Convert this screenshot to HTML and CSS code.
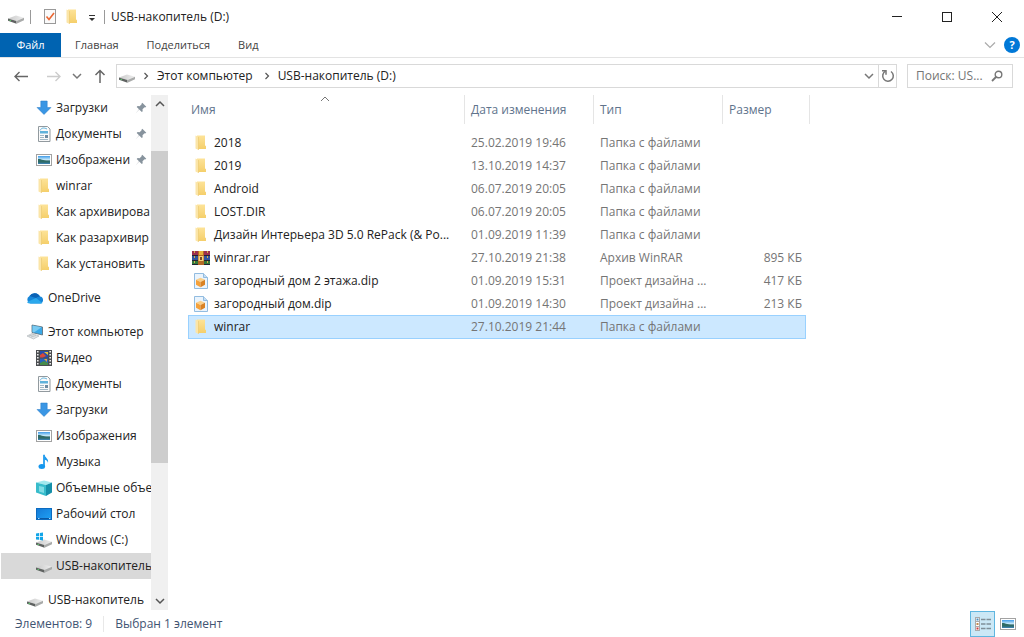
FILE: index.html
```html
<!DOCTYPE html>
<html lang="ru">
<head>
<meta charset="utf-8">
<title>USB-накопитель (D:)</title>
<link rel="stylesheet" href="styles.css">
</head>
<body>
<svg class="sprite" aria-hidden="true">
  <defs>
    <linearGradient id="g-folder" x1="0" x2="0" y1="0" y2="1"><stop offset="0" stop-color="#fde398"/><stop offset="1" stop-color="#f5cf6b"/></linearGradient>
    <linearGradient id="g-sky" x1="0" x2="0" y1="0" y2="1"><stop offset="0" stop-color="#3f9be8"/><stop offset=".5" stop-color="#d4f0fb"/><stop offset=".6" stop-color="#2f6668"/><stop offset="1" stop-color="#3d84b5"/></linearGradient>
    <linearGradient id="g-desk" x1="0" x2="1" y1="0" y2="1"><stop offset="0" stop-color="#1479d6"/><stop offset="1" stop-color="#1fa2f5"/></linearGradient>
    <linearGradient id="g-drive" x1="0" x2="1" y1="0" y2="0"><stop offset="0" stop-color="#c9c9c9"/><stop offset="1" stop-color="#eeeeee"/></linearGradient>
  </defs>
  <symbol id="folder" viewBox="0 0 16 16"><path d="M4 .5h8v10l1 .5v3H4z" fill="url(#g-folder)"/><path d="M2.500.5l3 1.500v13l-3-1.500z" fill="#fbe5a8"/><path d="M5.500 2v13" stroke="#e9c66c" stroke-width=".6"/></symbol>
  <symbol id="drive" viewBox="0 0 16 16"><path d="M0 9.500L8 6.500l8 2.200-7.500 3.300z" fill="url(#g-drive)"/><path d="M0 9.500L8.500 12v2.700L0 11.800z" fill="#5f6261"/><path d="M8.500 12L16 8.700v2.500l-7.500 3.500z" fill="#a9abaa"/><path d="M1.500 11.300l1.500.5" stroke="#58d36b"/></symbol>
  <symbol id="windrive" viewBox="0 0 16 16"><use href="#drive" x="0" y="1"/><path d="M0 1.500l3-.5v3H0zM3.800.9L7 .4V4H3.800zM0 4.800h3v3L0 7.400zM3.800 4.800H7v3.600L3.800 7.900z" fill="#12a5e8"/></symbol>
  <symbol id="download" viewBox="0 0 16 16"><path d="M4.800 1h6.400v6.500H15L8 14.500 1 7.500h3.800z" fill="#3a96e4" stroke="#2478c6" stroke-width=".5"/></symbol>
  <symbol id="doc" viewBox="0 0 16 16"><path d="M2.500.5h9l2.500 2.500v12.500H2.500z" fill="#fafafa" stroke="#929a9f"/><path d="M4 4.500c1.500-3 4-3 7-1.500" stroke="#62b4de" fill="none"/><rect x="4" y="5" width="8" height="2.500" fill="#5fb2db"/><path d="M4 9.500h4M4 11.500h4M4 13.500h8" stroke="#9fb8c6"/><rect x="9" y="9" width="3" height="3" fill="#6d8ba1"/></symbol>
  <symbol id="picture" viewBox="0 0 16 16"><rect x=".5" y="2.500" width="15" height="11" fill="#fff" stroke="#a2a2a2"/><rect x="2" y="4" width="12" height="8" fill="url(#g-sky)"/><path d="M2 7c4 0 6 2 12 2.500v1H2z" fill="#2f6b66"/></symbol>
  <symbol id="cloud" viewBox="0 0 18 16"><path d="M4.500 13.500A4 4 0 0 1 3.500 6 6 6 0 0 1 14 6.500a3.600 3.600 0 0 1 .5 7z" fill="#1686d9"/><path d="M3.500 6A6 6 0 0 1 14 6.500c-2 0-3 1-4 1.500z" fill="#0b62b5"/><path d="M1 12L10 8l6.500 5c-.6.4-1.200.5-2 .5h-10C3 13.500 1.600 13 1 12z" fill="#2ba8ec"/></symbol>
  <symbol id="pc" viewBox="0 0 16 16"><path d="M5 1l10.500 2v8L5 8.500z" fill="#3aa9e8" stroke="#5a6a73" stroke-width=".8"/><path d="M5.500 1.500l9 1.700L7 8.500l-1.500-.4z" fill="#7acbf2"/><path d="M0 12l5-2.500 7 2.500-5.500 3z" fill="#e1e5e7" stroke="#a9b0b4" stroke-width=".6"/><path d="M2 12l5-1.500M4 13l5-1.500" stroke="#a9b0b4" stroke-width=".6"/></symbol>
  <symbol id="video" viewBox="0 0 16 16"><rect width="16" height="16" fill="#4b4d50"/><rect x="4" y="1" width="8" height="6.500" fill="#244fae"/><rect x="4" y="8.500" width="8" height="6.500" fill="#2563bd"/><path d="M4 5l3-2 3 3-3 1.500H4z" fill="#d84a3a"/><path d="M8 2h4v3z" fill="#e5c43b"/><path d="M4 13l4-2 4 2v2H4z" fill="#468b4a"/><path d="M8 9h3v3z" fill="#e9a73a"/><path d="M1.800 1v15M14.200 1v15" stroke="#eee" stroke-width="1.600" stroke-dasharray="1.600 1.400"/></symbol>
  <symbol id="music" viewBox="0 0 16 16"><ellipse cx="5.800" cy="12.500" rx="3.300" ry="2.500" fill="#1597ee"/><path d="M8 .8v12" stroke="#1597ee" stroke-width="1.700"/><path d="M8.500.8c.5 3 4.500 4 3.500 8C11.500 6.500 10 6 8.500 5.500z" fill="#1597ee"/></symbol>
  <symbol id="cube" viewBox="0 0 16 16"><path d="M0 2.500L8 .5l8 2-6 2.500z" fill="#a2e8ee"/><path d="M0 2.500L10 5v11L0 12.500z" fill="#38bccb"/><path d="M10 5l6-2.500v10L10 16z" fill="#158fa9"/><path d="M3 6l5 1v6l-5-1.500z" fill="#80dce5"/></symbol>
  <symbol id="desktop" viewBox="0 0 16 16"><rect x=".5" y="2.500" width="15" height="11" fill="url(#g-desk)" stroke="#0c6bc0"/><path d="M1 12.500h14" stroke="#0b58a3"/><path d="M2 12.500h1.500M13 12.500h1.500" stroke="#9ed7ff"/></symbol>
  <symbol id="rar" viewBox="0 0 18 16"><rect y="1" width="18" height="5" fill="#9c2f4e"/><rect y="6" width="18" height="4" fill="#31539f"/><rect y="10" width="18" height="5" fill="#33793b"/><path d="M0 5.500h18M0 10.500h18M0 14.500h18" stroke="#232333"/><path d="M2.500 1v14M15.500 1v14" stroke="#d3b14b" stroke-dasharray="2 3"/><path d="M6 1h6v14H6z" fill="#b56a26"/><path d="M7 1h4v4H7z" fill="#e9b23b"/><rect x="6.500" y="6" width="5" height="5" fill="#f4d27a"/><path d="M8 7h2v3H8z" fill="#7b4a23"/></symbol>
  <symbol id="dip" viewBox="0 0 16 16"><path d="M1.500.5h9l4 4v11h-13z" fill="#eaf4fd" stroke="#92bce0"/><path d="M10.500.5v4h4" fill="#c6def3" stroke="#92bce0"/><path d="M3 6.800L7.500 4.800l4.500 2-4.500 2.100z" fill="#fbd08a"/><path d="M3 6.800l4.500 2.100v5.300L3 11.800z" fill="#f5a13a"/><path d="M12 6.800L7.500 8.900v5.300l4.500-2.400z" fill="#d98224"/></symbol>
  <symbol id="pin" viewBox="0 0 12 12"><path d="M7.300.8l4 4-1.200.6-.6-.1-2 2 .2 1.900-.9.900-2.600-2.500L.8 11.200 4 7.300 1.700 5l.9-.9 2 .2 2-2-.1-.6z" fill="#87939d"/></symbol>
  <symbol id="down" viewBox="0 0 12 12"><path d="M2 4l4 4 4-4" fill="none" stroke="currentColor" stroke-width="1.500"/></symbol>
  <symbol id="up" viewBox="0 0 12 12"><path d="M2 8l4-4 4 4" fill="none" stroke="currentColor" stroke-width="1.500"/></symbol>
  <symbol id="right" viewBox="0 0 12 12"><path d="M4.500 3l3 3-3 3" fill="none" stroke="currentColor" stroke-width="1.200"/></symbol>
</svg>

<div class="window">
  <header class="titlebar">
    <svg class="icon"><use href="#drive"/></svg>
    <span class="rule"></span>
    <button class="plain" aria-label="Свойства"><svg class="icon" viewBox="0 0 16 16"><rect x="2.500" y=".5" width="11" height="14" fill="#fafafa" stroke="#999"/><path d="M4.500 7.500l2.500 3 5-6.500" fill="none" stroke="#ea6632" stroke-width="1.600"/></svg></button>
    <button class="plain" aria-label="Новая папка"><svg class="icon"><use href="#folder"/></svg></button>
    <button class="plain" aria-label="Настройка панели"><svg class="small" viewBox="0 0 12 12"><path d="M3 4.500h6" stroke="#333"/><path d="M3 7h6L6 10z" fill="#333"/></svg></button>
    <span class="rule"></span>
    <h1 class="title">USB-накопитель (D:)</h1>
    <div class="controls">
      <button class="control" aria-label="Свернуть"><svg class="small" viewBox="0 0 12 12"><path d="M1 5.500h10" stroke="#222"/></svg></button>
      <button class="control" aria-label="Развернуть"><svg class="small" viewBox="0 0 12 12"><rect x="1.500" y="1.500" width="9" height="9" fill="none" stroke="#222"/></svg></button>
      <button class="control" aria-label="Закрыть"><svg class="small" viewBox="0 0 12 12"><path d="M1 1l10 10M11 1L1 11" stroke="#222"/></svg></button>
    </div>
  </header>

  <nav class="tabs" aria-label="Лента">
    <button class="tab tab-file">Файл</button>
    <button class="tab">Главная</button>
    <button class="tab">Поделиться</button>
    <button class="tab">Вид</button>
    <div class="tabs-end">
      <button class="plain expand" aria-label="Развернуть ленту"><svg class="small" viewBox="0 0 12 12"><path d="M1 3.500l5 5 5-5" fill="none" stroke="currentColor" stroke-width="1.200"/></svg></button>
      <button class="help" aria-label="Справка">?</button>
    </div>
  </nav>

  <div class="navbar">
    <div class="history">
      <button class="plain" aria-label="Назад"><svg class="icon" viewBox="0 0 16 16"><path d="M15 8.500H2M6.500 4L2 8.500 6.500 13" fill="none" stroke="#666" stroke-width="1.400"/></svg></button>
      <button class="plain forward" aria-label="Вперёд"><svg class="icon" viewBox="0 0 16 16"><path d="M1 8.500h13M9.500 4L14 8.500 9.500 13" fill="none" stroke="#ccc" stroke-width="1.400"/></svg></button>
      <button class="plain" aria-label="Последние"><svg class="small"><use href="#down"/></svg></button>
      <button class="plain" aria-label="Вверх"><svg class="icon" viewBox="0 0 16 16"><path d="M8 15V2.500M3.500 7L8 2.500 12.500 7" fill="none" stroke="#666" stroke-width="1.500"/></svg></button>
    </div>
    <div class="address">
      <svg class="icon"><use href="#drive"/></svg>
      <svg class="small crumb-arrow"><use href="#right"/></svg>
      <button class="plain crumb">Этот компьютер</button>
      <svg class="small crumb-arrow"><use href="#right"/></svg>
      <button class="plain crumb">USB-накопитель (D:)</button>
      <div class="address-end">
        <button class="plain address-button" aria-label="Предыдущие расположения"><svg class="small"><use href="#down"/></svg></button>
        <button class="plain address-button refresh" aria-label="Обновить"><svg class="icon" viewBox="0 0 16 16"><path d="M5.500 3.200A5.300 5.300 0 1 0 11 3.500" fill="none" stroke="#777" stroke-width="1.500"/><path d="M2 2.800h4v4" fill="none" stroke="#777" stroke-width="1.500"/></svg></button>
      </div>
    </div>
    <div class="search">
      <input class="search-input" type="text" placeholder="Поиск: US..." aria-label="Поиск">
      <svg class="small" viewBox="0 0 12 12"><circle cx="7.500" cy="4.500" r="3.300" fill="none" stroke="#777" stroke-width="1.400"/><path d="M5 7L1 11" stroke="#777" stroke-width="1.800"/></svg>
    </div>
  </div>

  <main class="content">
    <aside class="sidebar">
      <div class="tree">
        <ul class="group">
          <li><a class="item child" href="#"><svg class="icon"><use href="#download"/></svg><span class="label">Загрузки</span><svg class="small"><use href="#pin"/></svg></a></li>
          <li><a class="item child" href="#"><svg class="icon"><use href="#doc"/></svg><span class="label">Документы</span><svg class="small"><use href="#pin"/></svg></a></li>
          <li><a class="item child" href="#"><svg class="icon"><use href="#picture"/></svg><span class="label">Изображени</span><svg class="small"><use href="#pin"/></svg></a></li>
          <li><a class="item child" href="#"><svg class="icon"><use href="#folder"/></svg><span class="label">winrar</span></a></li>
          <li><a class="item child" href="#"><svg class="icon"><use href="#folder"/></svg><span class="label">Как архивирова</span></a></li>
          <li><a class="item child" href="#"><svg class="icon"><use href="#folder"/></svg><span class="label">Как разархивир</span></a></li>
          <li><a class="item child" href="#"><svg class="icon"><use href="#folder"/></svg><span class="label">Как установить</span></a></li>
        </ul>
        <ul class="group">
          <li><a class="item" href="#"><svg class="icon wide"><use href="#cloud"/></svg><span class="label">OneDrive</span></a></li>
        </ul>
        <ul class="group">
          <li><a class="item" href="#"><svg class="icon wide"><use href="#pc"/></svg><span class="label">Этот компьютер</span></a></li>
          <li><a class="item child" href="#"><svg class="icon"><use href="#video"/></svg><span class="label">Видео</span></a></li>
          <li><a class="item child" href="#"><svg class="icon"><use href="#doc"/></svg><span class="label">Документы</span></a></li>
          <li><a class="item child" href="#"><svg class="icon"><use href="#download"/></svg><span class="label">Загрузки</span></a></li>
          <li><a class="item child" href="#"><svg class="icon"><use href="#picture"/></svg><span class="label">Изображения</span></a></li>
          <li><a class="item child" href="#"><svg class="icon"><use href="#music"/></svg><span class="label">Музыка</span></a></li>
          <li><a class="item child" href="#"><svg class="icon"><use href="#cube"/></svg><span class="label">Объемные объе</span></a></li>
          <li><a class="item child" href="#"><svg class="icon"><use href="#desktop"/></svg><span class="label">Рабочий стол</span></a></li>
          <li><a class="item child" href="#"><svg class="icon"><use href="#windrive"/></svg><span class="label">Windows (C:)</span></a></li>
          <li><a class="item child current" href="#"><svg class="icon"><use href="#drive"/></svg><span class="label">USB-накопитель</span></a></li>
        </ul>
        <ul class="group">
          <li><a class="item" href="#"><svg class="icon wide"><use href="#drive"/></svg><span class="label">USB-накопитель</span></a></li>
        </ul>
      </div>
      <div class="scrollbar">
        <button class="plain scroll-button" aria-label="Прокрутить вверх"><svg class="small"><use href="#up"/></svg></button>
        <div class="track"><span class="gap-top"></span><span class="thumb"></span><span class="gap-bottom"></span></div>
        <button class="plain scroll-button" aria-label="Прокрутить вниз"><svg class="small"><use href="#down"/></svg></button>
      </div>
    </aside>

    <section class="files">
      <table class="list">
        <colgroup><col class="col-name"><col class="col-date"><col class="col-type"><col class="col-size"><col class="col-edge"></colgroup>
        <thead>
          <tr><th class="sorted">Имя<svg class="sort" viewBox="0 0 12 8"><path d="M2 6l4-4 4 4" fill="none" stroke="#777"/></svg></th><th>Дата изменения</th><th>Тип</th><th>Размер</th><th class="edge"></th></tr>
        </thead>
        <tbody>
          <tr><td><span class="name"><svg class="icon wide"><use href="#folder"/></svg>2018</span></td><td>25.02.2019 19:46</td><td>Папка с файлами</td><td class="size"></td><td></td></tr>
          <tr><td><span class="name"><svg class="icon wide"><use href="#folder"/></svg>2019</span></td><td>13.10.2019 14:37</td><td>Папка с файлами</td><td class="size"></td><td></td></tr>
          <tr><td><span class="name"><svg class="icon wide"><use href="#folder"/></svg>Android</span></td><td>06.07.2019 20:05</td><td>Папка с файлами</td><td class="size"></td><td></td></tr>
          <tr><td><span class="name"><svg class="icon wide"><use href="#folder"/></svg>LOST.DIR</span></td><td>06.07.2019 20:05</td><td>Папка с файлами</td><td class="size"></td><td></td></tr>
          <tr><td><span class="name"><svg class="icon wide"><use href="#folder"/></svg>Дизайн Интерьера 3D 5.0 RePack (&amp; Po...</span></td><td>01.09.2019 11:39</td><td>Папка с файлами</td><td class="size"></td><td></td></tr>
          <tr><td><span class="name"><svg class="icon wide"><use href="#rar"/></svg>winrar.rar</span></td><td>27.10.2019 21:38</td><td>Архив WinRAR</td><td class="size">895 КБ</td><td></td></tr>
          <tr><td><span class="name"><svg class="icon wide"><use href="#dip"/></svg>загородный дом 2 этажа.dip</span></td><td>01.09.2019 15:31</td><td>Проект дизайна ...</td><td class="size">417 КБ</td><td></td></tr>
          <tr><td><span class="name"><svg class="icon wide"><use href="#dip"/></svg>загородный дом.dip</span></td><td>01.09.2019 14:30</td><td>Проект дизайна ...</td><td class="size">213 КБ</td><td></td></tr>
          <tr class="selected"><td><span class="name"><svg class="icon wide"><use href="#folder"/></svg>winrar</span></td><td>27.10.2019 21:44</td><td>Папка с файлами</td><td class="size"></td><td></td></tr>
        </tbody>
      </table>
    </section>
  </main>

  <footer class="status">
    <span>Элементов: 9</span>
    <span class="status-rule"></span>
    <span>Выбран 1 элемент</span>
    <div class="views">
      <button class="view view-active" aria-label="Таблица"><svg class="icon" viewBox="0 0 16 16"><rect x=".5" y="1.500" width="4" height="13" fill="#fff" stroke="#aaa"/><path d="M.5 5.500h4M.5 10.500h4" stroke="#aaa"/><rect x="1.500" y="2.500" width="2" height="2" fill="#4a90c0"/><rect x="1.500" y="7" width="2" height="2" fill="#c08a4a"/><rect x="1.500" y="11.500" width="2" height="2" fill="#d03a3a"/><path d="M6 3.500h10M6 8h10M6 12.500h10" stroke="#7f8f99" stroke-width="1.300" stroke-dasharray="4.500 1"/></svg></button>
      <button class="view" aria-label="Крупные значки"><svg class="icon"><use href="#picture"/></svg></button>
    </div>
  </footer>
</div>
</body>
</html>
```
FILE: styles.css
```css
* { box-sizing: border-box; }

body {
  margin: 0;
  background: #fff;
  color: #222;
  font-family: "Open Sans", "Noto Sans", sans-serif;
  font-size: 12px;
  line-height: 18px;
}

button, input { font: inherit; color: inherit; }

ul { list-style: none; margin: 0; padding: 0; }

svg { display: block; flex: none; }

.sprite { position: absolute; width: 0; height: 0; }
.icon { width: 16px; height: 16px; }
.wide { width: 18px; }
.small { width: 12px; height: 12px; }

.plain {
  display: flex;
  align-items: center;
  justify-content: center;
  padding: 0;
  border: 0;
  background: none;
}

.window { display: flex; flex-direction: column; height: 100vh; }

/* Title bar */
.titlebar { display: flex; align-items: center; gap: 6px; height: 33px; padding-left: 8px; }
.rule { width: 1px; height: 14px; background: #999; }
.rule:nth-child(2) { margin-right: 5px; }
.title { margin: 0; font-size: 12px; font-weight: 400; }
.controls { display: flex; margin-left: auto; padding-right: 2px; }
.control {
  display: flex;
  align-items: center;
  justify-content: center;
  width: 50px;
  height: 32px;
  padding: 0;
  border: 0;
  background: none;
}

/* Ribbon tabs */
.tabs { display: flex; height: 25px; border-bottom: 1px solid #e3e3e3; font-size: 11px; }
.tab { padding: 0 14px; border: 0; background: none; color: #444; }
.tab-file { width: 61px; background: #0063b1; color: #fff; }
.tabs-end { display: flex; align-items: center; gap: 8px; margin-left: auto; padding-right: 4px; }
.expand { color: #aaa; }
.help {
  width: 16px;
  height: 16px;
  padding: 0;
  border: 0;
  border-radius: 50%;
  background: #0078d7;
  color: #fff;
  font-weight: 700;
  line-height: 16px;
}

/* Navigation bar */
.navbar { display: flex; align-items: center; gap: 8px; padding: 6px 11px 7px 13px; }
.history { display: flex; align-items: center; justify-content: space-between; width: 95px; color: #777; }
.forward { margin-left: 8px; }
.address {
  display: flex;
  flex: 1;
  align-items: center;
  height: 24px;
  padding-left: 2px;
  border: 1px solid #d9d9d9;
}
.crumb { padding-right: 3px; }
.crumb-arrow { margin: 0 5px; color: #555; }
.address-end { display: flex; align-self: stretch; margin-left: auto; color: #777; }
.address-button { width: 18px; }
.refresh { border-left: 1px solid #d9d9d9; }
.search {
  display: flex;
  align-items: center;
  width: 106px;
  height: 24px;
  margin-left: 2px;
  padding: 0 9px 0 8px;
  border: 1px solid #d9d9d9;
}
.search-input { flex: 1; min-width: 0; padding: 0; border: 0; background: none; outline: 0; }
.search-input::placeholder { color: #757575; opacity: 1; }

.content { display: flex; flex: 1; min-height: 0; }

/* Navigation pane */
.sidebar { display: flex; width: 168px; }
.tree {
  display: flex;
  flex: 1;
  flex-direction: column;
  gap: 8px;
  min-width: 0;
  overflow: hidden;
  padding-left: 1px;
}
.item {
  display: flex;
  align-items: center;
  height: 26px;
  padding-left: 25px;
  gap: 4px;
  color: inherit;
  text-decoration: none;
}
.child { padding-left: 35px; }
.child .small { margin-right: 4px; margin-left: -4px; }
.label { flex: 1; white-space: nowrap; }
.current { background: #d9d9d9; }
.scrollbar { display: flex; flex-direction: column; width: 17px; background: #f0f0f0; color: #555; }
.scroll-button { height: 18px; }
.track { display: flex; flex: 1; flex-direction: column; }
.gap-top { flex: 38; }
.thumb { flex: 312; background: #cdcdcd; }
.gap-bottom { flex: 129; }

/* File list */
.files { flex: 1; min-width: 0; padding-left: 20px; }
.list { width: 622px; border-collapse: separate; border-spacing: 0; table-layout: fixed; color: #757575; }
.col-name { width: 277px; }
.col-date, .col-type { width: 129px; }
.col-size { width: 83px; }
.col-edge { width: 4px; }
.list th {
  height: 29px;
  padding: 0 0 0 6px;
  border-right: 1px solid #e5e5e5;
  color: #60738c;
  font-weight: 400;
  text-align: left;
}
.list th:nth-child(4) { border-right: 0; }
.list .sorted { position: relative; padding-left: 3px; }
.list .edge { padding: 0; }
.sort { position: absolute; top: 0; left: 131px; width: 12px; height: 8px; }
.list tbody::before { content: ""; display: table-row; height: 7px; }
.list td {
  height: 23px;
  padding: 0 0 0 6px;
  border: 0 solid #99d1ff;
  line-height: 18px;
  white-space: nowrap;
}
.list td:first-child { padding-left: 4px; }
.list td:last-child { padding: 0; }
.list .size { padding: 0 4px 0 0; text-align: right; }
.name { display: flex; align-items: center; gap: 4px; color: #222; }
.list .selected td { height: 24px; border-width: 1px 0; background: #cce8ff; }
.list .selected td:first-child { border-left-width: 1px; padding-left: 3px; }
.list .selected .size { border-right-width: 1px; }
.list .selected td:last-child { border: 0; background: none; }

/* Status bar */
.status { display: flex; align-items: center; gap: 11px; height: 27px; padding: 0 4px 0 15px; color: #3f5472; }
.status-rule { width: 1px; height: 16px; background: #e8e8e8; }
.views { display: flex; margin-left: auto; }
.view {
  display: flex;
  align-items: center;
  justify-content: center;
  width: 25px;
  height: 26px;
  padding: 0;
  border: 1px solid transparent;
  background: none;
}
.view-active { border-color: #5fb6e0; background: #cbe8f6; }
```
